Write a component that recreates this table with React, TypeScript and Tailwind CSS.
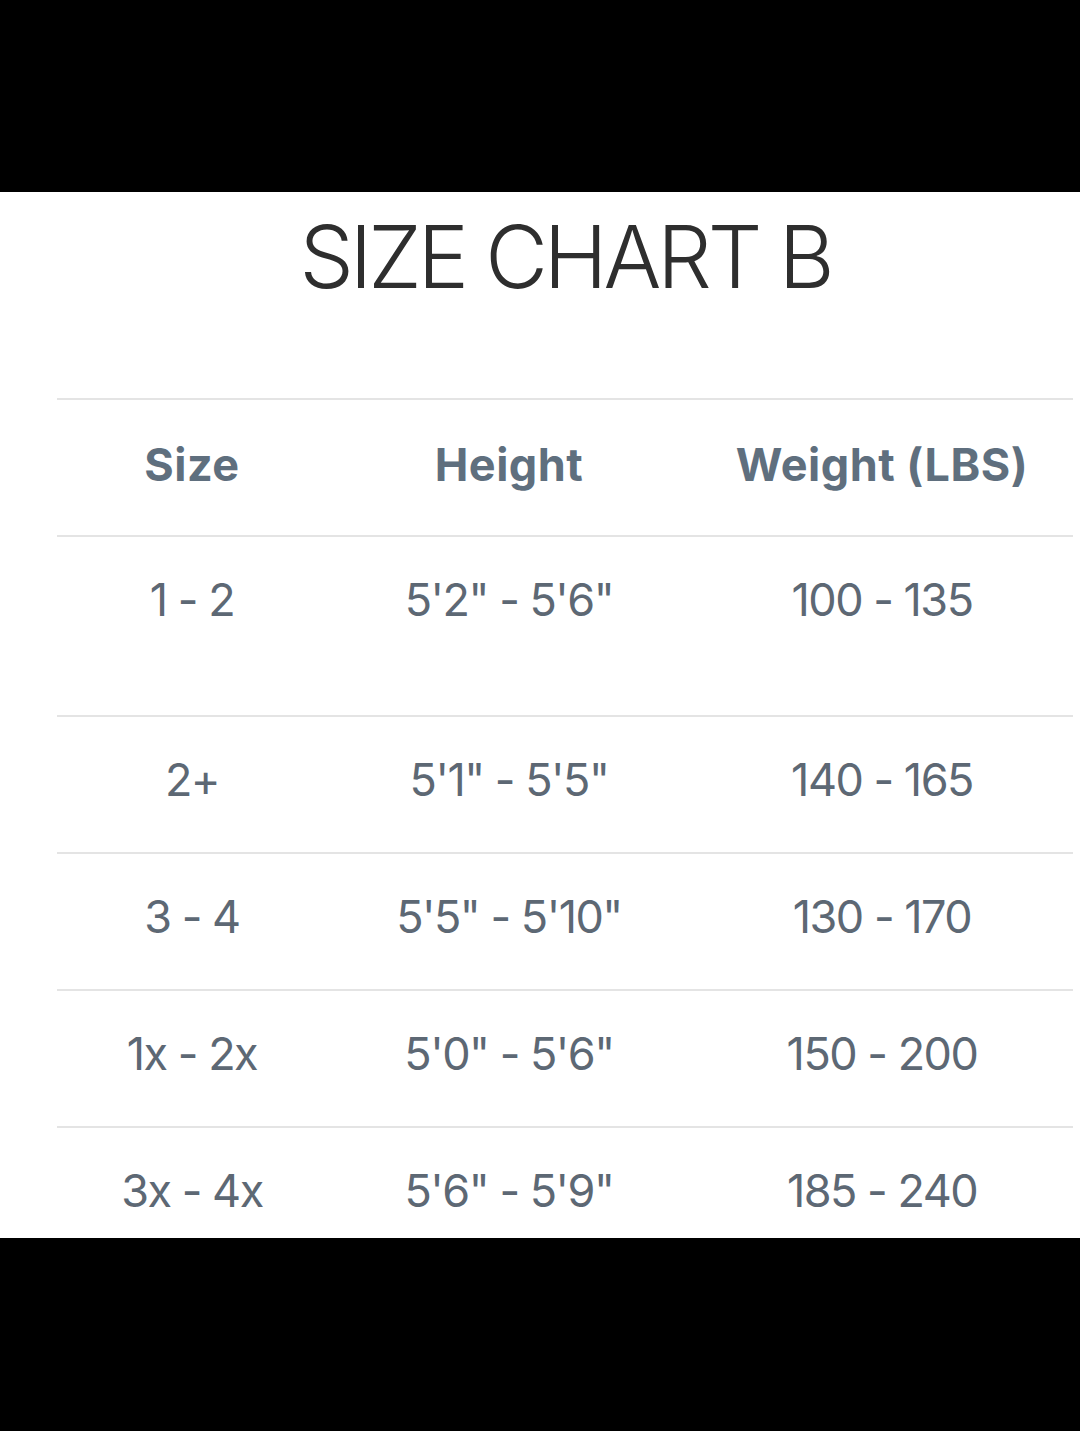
const ROWS = [
  { size: "1 - 2", height: "5'2\" - 5'6\"", weight: "100 - 135", h: "h-[180px]" },
  { size: "2+", height: "5'1\" - 5'5\"", weight: "140 - 165", h: "h-[137px]" },
  { size: "3 - 4", height: "5'5\" - 5'10\"", weight: "130 - 170", h: "h-[137px]" },
  { size: "1x - 2x", height: "5'0\" - 5'6\"", weight: "150 - 200", h: "h-[137px]" },
  { size: "3x - 4x", height: "5'6\" - 5'9\"", weight: "185 - 240", h: "h-[137px]" },
];

export default function App() {
  return (
    <div className="flex h-[1431px] w-[1080px] flex-col bg-black font-['Inter',sans-serif]">
      <div className="h-[192px] shrink-0" />
      <div className="h-[1046px] shrink-0 overflow-hidden bg-white">
        {/* title */}
        <h1 className="pl-[50px] pt-[22px] text-center text-[86px] font-light leading-none tracking-[-4px] text-[#2e2e2e]">
          SIZE CHART B
        </h1>

        {/* table */}
        <div className="ml-[57px] mt-[98px] w-[1016px]">
          <div className="grid h-[137px] grid-cols-[270px_364px_382px] border-t-2 border-[#e4e4e4] pt-[42px] text-[45px] font-bold leading-none tracking-[0.5px] text-[#5f6f7e]">
            <div className="text-center">Size</div>
            <div className="text-center">Height</div>
            <div className="text-center">Weight (LBS)</div>
          </div>
          {ROWS.map((r) => (
            <div
              key={r.size}
              className={`grid ${r.h} grid-cols-[270px_364px_382px] border-t-2 border-[#e4e4e4] pt-[40px] text-[45px] font-normal leading-none tracking-[-1.5px] text-[#5d6874]`}
            >
              <div className="text-center">{r.size}</div>
              <div className="text-center">{r.height}</div>
              <div className="text-center">{r.weight}</div>
            </div>
          ))}
        </div>
      </div>
      <div className="flex-1" />
    </div>
  );
}
